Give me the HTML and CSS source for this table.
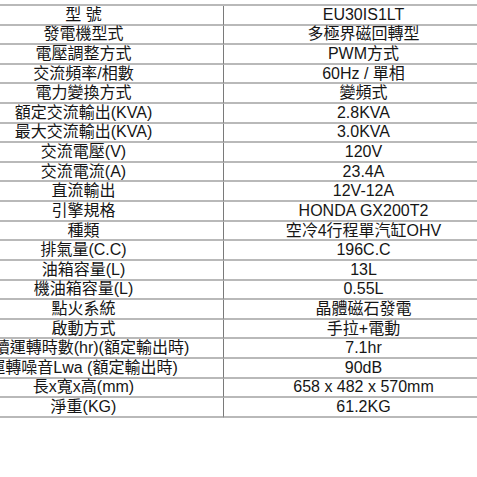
FILE: index.html
```html
<!DOCTYPE html>
<html lang="zh-Hant">
<head>
<meta charset="utf-8">
<title>規格表</title>
<link rel="stylesheet" href="styles.css">
</head>
<body>
<div class="spec">
  <div class="k">型 號</div><div class="v">EU30IS1LT</div>
  <div class="k">發電機型式</div><div class="v">多極界磁回轉型</div>
  <div class="k">電壓調整方式</div><div class="v">PWM方式</div>
  <div class="k">交流頻率/相數</div><div class="v">60Hz / 單相</div>
  <div class="k">電力變換方式</div><div class="v">變頻式</div>
  <div class="k">額定交流輸出(KVA)</div><div class="v">2.8KVA</div>
  <div class="k">最大交流輸出(KVA)</div><div class="v">3.0KVA</div>
  <div class="k">交流電壓(V)</div><div class="v">120V</div>
  <div class="k">交流電流(A)</div><div class="v">23.4A</div>
  <div class="k">直流輸出</div><div class="v">12V-12A</div>
  <div class="k">引擎規格</div><div class="v">HONDA GX200T2</div>
  <div class="k">種類</div><div class="v">空冷4行程單汽缸OHV</div>
  <div class="k">排氣量(C.C)</div><div class="v">196C.C</div>
  <div class="k">油箱容量(L)</div><div class="v">13L</div>
  <div class="k">機油箱容量(L)</div><div class="v">0.55L</div>
  <div class="k">點火系統</div><div class="v">晶體磁石發電</div>
  <div class="k">啟動方式</div><div class="v">手拉+電動</div>
  <div class="k">連續運轉時數(hr)(額定輸出時)</div><div class="v">7.1hr</div>
  <div class="k">運轉噪音Lwa (額定輸出時)</div><div class="v">90dB</div>
  <div class="k">長x寬x高(mm)</div><div class="v">658 x 482 x 570mm</div>
  <div class="k">淨重(KG)</div><div class="v">61.2KG</div>
</div>
</body>
</html>
```
FILE: styles.css
```css
html, body {
  margin: 0;
  padding: 0;
  background: #ffffff;
  overflow: hidden;
}
body {
  font-family: "Liberation Sans", Arial, "Noto Sans CJK TC", sans-serif;
  font-size: 16px;
  color: #161616;
}
.spec {
  display: grid;
  grid-template-columns: 280px 279px;
  grid-auto-rows: 19.62px;
  width: 559px;
  margin-top: 4px;
  margin-left: -56px;
  border-top: 2px solid #b9b9b9;
}
.k, .v {
  box-sizing: border-box;
  border-bottom: 2px solid #b9b9b9;
  display: flex;
  align-items: center;
  justify-content: center;
  white-space: nowrap;
  line-height: 17px;
  padding-bottom: 1px;
}
.k {
  border-right: 1px solid #7a7a7a;
}
```
